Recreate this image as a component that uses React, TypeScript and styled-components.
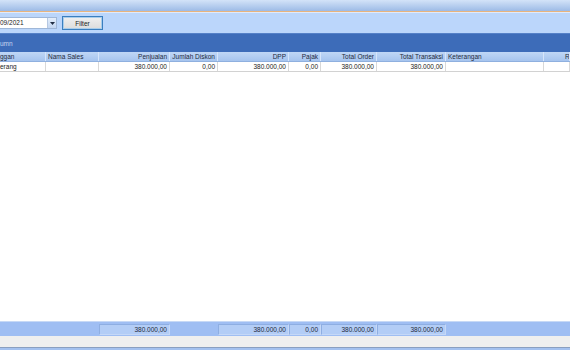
import { createGlobalStyle, styled } from "styled-components";

const GlobalStyle = createGlobalStyle`
  html, body {
    margin: 0;
    padding: 0;
    width: 570px;
    height: 350px;
    overflow: hidden;
    background: #ffffff;
    font-family: "Liberation Sans", Arial, sans-serif;
  }
`;

const COLS = "46px 53px 71px 48px 71px 32px 56px 69px 98px 1fr";

type Col = { title: string; right?: boolean };

const columns: Col[] = [
  { title: "ggan" },
  { title: "Nama Sales" },
  { title: "Penjualan", right: true },
  { title: "Jumlah Diskon", right: true },
  { title: "DPP", right: true },
  { title: "Pajak", right: true },
  { title: "Total Order", right: true },
  { title: "Total Transaksi", right: true },
  { title: "Keterangan" },
  { title: "R" },
];

const row = ["erang", "", "380.000,00", "0,00", "380.000,00", "0,00", "380.000,00", "380.000,00", "", ""];
const totals = ["", "", "380.000,00", "", "380.000,00", "0,00", "380.000,00", "380.000,00", "", ""];

const App = () => {
  return (
    <Window>
      <GlobalStyle />
      <TitleBar />
      <Toolbar>
        <DateBox>
          <DateText>09/2021</DateText>
          <DropButton>
            <svg width="5" height="3" viewBox="0 0 5 3">
              <path d="M0 0 H5 L2.5 3 Z" fill="#1f2d44" />
            </svg>
          </DropButton>
        </DateBox>
        <FilterButton>Filter</FilterButton>
      </Toolbar>
      <GroupPanel>umn</GroupPanel>
      <HeaderRow>
        {columns.map((c, i) => (
          <HeaderCell key={i} $right={c.right}>
            {c.title}
          </HeaderCell>
        ))}
      </HeaderRow>
      <DataRow>
        {row.map((v, i) => (
          <DataCell key={i} $right={columns[i].right}>
            {v}
          </DataCell>
        ))}
      </DataRow>
      <EmptyArea />
      <FooterRow>
        {totals.map((v, i) => (
          <FooterSlot key={i}>{v && <TotalBox>{v}</TotalBox>}</FooterSlot>
        ))}
      </FooterRow>
      <StatusStrip />
      <BottomLine />
    </Window>
  );
};

export default App;

const Window = styled.div`
  display: flex;
  flex-direction: column;
  width: 570px;
  height: 350px;
`;

const TitleBar = styled.div`
  height: 11px;
  background: linear-gradient(#d3e3f8, #9dbbe6);
  border-bottom: 1px solid #e9b47c;
`;

const Toolbar = styled.div`
  height: 21px;
  display: flex;
  align-items: center;
  gap: 5px;
  background: #bbd6fb;
  border-top: 1px solid #dfeafc;
  box-sizing: border-box;
`;

const DateBox = styled.div`
  width: 57px;
  height: 12px;
  display: flex;
  align-items: stretch;
  background: #ffffff;
  border: 1px solid #9fb7d8;
  border-left: none;
  box-sizing: border-box;
`;

const DateText = styled.div`
  flex: 1;
  font-size: 6.5px;
  line-height: 10px;
  color: #1b1b1b;
`;

const DropButton = styled.div`
  width: 8px;
  display: flex;
  align-items: center;
  justify-content: center;
  background: linear-gradient(#e4eefb, #c3d6f1);
  border-left: 1px solid #b6c8e2;
`;

const FilterButton = styled.div`
  width: 41px;
  height: 14px;
  box-sizing: border-box;
  display: flex;
  align-items: center;
  justify-content: center;
  font-size: 6.5px;
  color: #1b1b1b;
  background: linear-gradient(#f0f0f0, #dcdcdc);
  border: 1px solid #3b7fbf;
  box-shadow: inset 0 0 0 1px #a9cdeb;
`;

const GroupPanel = styled.div`
  height: 19px;
  display: flex;
  align-items: center;
  font-size: 6.5px;
  color: #c6d7f1;
  background: #3d6cb9;
  border-top: 1px solid #5581c8;
  box-sizing: border-box;
`;

const HeaderRow = styled.div`
  display: grid;
  grid-template-columns: ${COLS};
  height: 10px;
  background: linear-gradient(#c0d7f6, #a6c4ee);
  border-bottom: 1px solid #8fb0df;
  box-sizing: border-box;
`;

const HeaderCell = styled.div<{ $right?: boolean }>`
  font-size: 6.5px;
  line-height: 9px;
  color: #1d2a3d;
  padding: 0 2px;
  text-align: ${(p) => (p.$right ? "right" : "left")};
  border-right: 1px solid #d6e5fa;
  white-space: nowrap;
  overflow: hidden;

  &:first-child {
    padding-left: 0;
  }
  &:last-child {
    padding-left: 21px;
  }
`;

const DataRow = styled.div`
  display: grid;
  grid-template-columns: ${COLS};
  height: 10px;
  border-bottom: 1px solid #d2d2d2;
  box-sizing: border-box;
`;

const DataCell = styled.div<{ $right?: boolean }>`
  font-size: 6.5px;
  line-height: 9px;
  color: #1b1b1b;
  padding: 0 2px;
  text-align: ${(p) => (p.$right ? "right" : "left")};
  border-right: 1px solid #d8d8d8;
  white-space: nowrap;
  overflow: hidden;

  &:first-child {
    padding-left: 0;
  }
`;

const EmptyArea = styled.div`
  flex: 1;
  background: #ffffff;
`;

const FooterRow = styled.div`
  display: grid;
  grid-template-columns: ${COLS};
  height: 15px;
  background: #9fbef3;
  border-top: 1px solid #c7d9f6;
  box-sizing: border-box;
`;

const FooterSlot = styled.div`
  display: flex;
  align-items: center;
`;

const TotalBox = styled.div`
  flex: 1;
  height: 11px;
  box-sizing: border-box;
  font-size: 6.5px;
  line-height: 9px;
  text-align: right;
  padding: 0 2px;
  color: #1d2a3d;
  background: #b3cdf6;
  border: 1px solid #8eaee2;
  border-right-color: #c5d8f7;
  border-bottom-color: #c5d8f7;
`;

const StatusStrip = styled.div`
  height: 11px;
  background: #efefef;
  border-bottom: 1px solid #8a9fc0;
`;

const BottomLine = styled.div`
  height: 2px;
  background: #a4c1ef;
`;
